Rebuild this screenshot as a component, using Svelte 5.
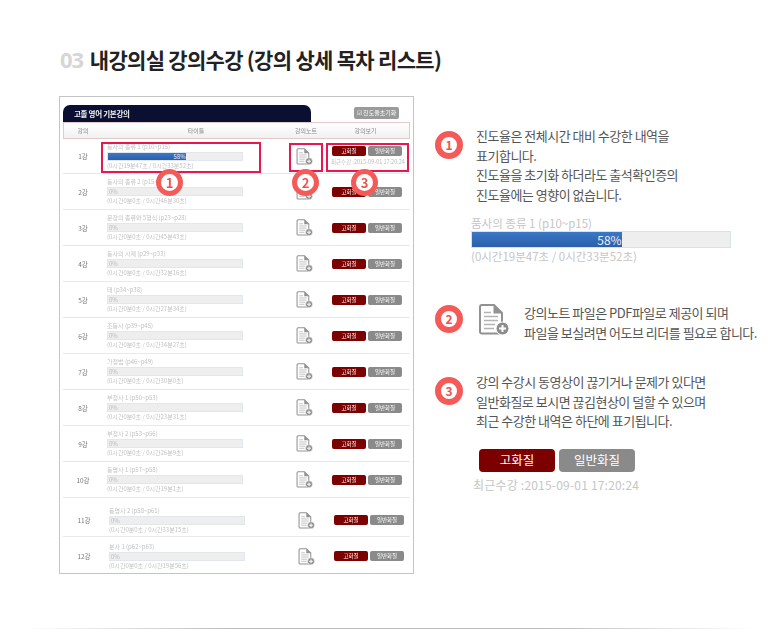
<script>
  const lectures = [
    { no: 1, title: '동사의 종류 1 (p10~p15)', time: '(0시간19분47초 / 0시간33분52초)', pct: 58, recent: '2015-09-01 17:20:24' },
    { no: 2, title: '동사의 종류 2 (p15~p22)', time: '(0시간0분0초 / 0시간46분30초)', pct: 0 },
    { no: 3, title: '문장의 종류와 5형식 (p23~p28)', time: '(0시간0분0초 / 0시간45분43초)', pct: 0 },
    { no: 4, title: '동사의 시제 (p29~p33)', time: '(0시간0분0초 / 0시간32분16초)', pct: 0 },
    { no: 5, title: '태 (p34~p38)', time: '(0시간0분0초 / 0시간27분34초)', pct: 0 },
    { no: 6, title: '조동사 (p39~p45)', time: '(0시간0분0초 / 0시간34분27초)', pct: 0 },
    { no: 7, title: '가정법 (p46~p49)', time: '(0시간0분0초 / 0시간30분0초)', pct: 0 },
    { no: 8, title: '부정사 1 (p50~p53)', time: '(0시간0분0초 / 0시간23분31초)', pct: 0 },
    { no: 9, title: '부정사 2 (p53~p56)', time: '(0시간0분0초 / 0시간26분9초)', pct: 0 },
    { no: 10, title: '동명사 1 (p57~p58)', time: '(0시간0분0초 / 0시간19분1초)', pct: 0 },
    { no: 11, title: '동명사 2 (p58~p61)', time: '(0시간0분0초 / 0시간33분15초)', pct: 0 },
    { no: 12, title: '분사 1 (p62~p63)', time: '(0시간0분0초 / 0시간19분56초)', pct: 0 },
  ];
</script>

{#snippet docIcon(cls)}
  <svg class={cls} viewBox="0 0 32 32" fill="none" aria-hidden="true">
    <path d="M2 3.500Q2 1.500 4 1.500H16L24 9.500V28Q24 30 22 30H4Q2 30 2 28Z" fill="#fff" stroke="#929292" stroke-width="2" />
    <path d="M15.500 1.500V10H24Z" fill="#929292" />
    <path d="M6 9H13M6 13H20M6 17H20M6 21H17M6 25H16" stroke="#b4b4b4" stroke-width="1.500" />
    <circle cx="24.500" cy="25" r="6.500" fill="#8c8c8c" stroke="#fff" stroke-width="1" />
    <path d="M24.500 21.500V28.500M21 25H28" stroke="#fff" stroke-width="2" />
  </svg>
{/snippet}

{#snippet badge(n)}
  <span class="badge">{n}</span>
{/snippet}

<div class="page">
  <h1 class="heading"><span class="num">03</span>내강의실 강의수강 (강의 상세 목차 리스트)</h1>

  <div class="content">
    <div class="panel">
      <div class="panel-top">
        <div class="tab">고졸 영어 기본강의</div>
        <div class="reset">☑ 진도율초기화</div>
      </div>
      <div class="thead">
        <span>강의</span><span>타이틀</span><span>강의노트</span><span>강의보기</span>
      </div>
      {#each lectures as l}
        <div class="row" class:late={l.no > 10} class:r11={l.no === 11} class:r12={l.no === 12} class:r1={l.no === 1}>
          <span class="no">{l.no}강</span>
          <div class="info">
            <div class="t">{l.title}</div>
            <div class="bar">
              {#if l.pct}
                <div class="fill" style="width:{l.pct}%">{l.pct}%</div>
              {:else}
                <span class="zero">0%</span>
              {/if}
            </div>
            <div class="t">{l.time}</div>
          </div>
          <div class="note">{@render docIcon('doc')}</div>
          <div class="view">
            <div class="btns"><span class="btn hi">고화질</span><span class="btn lo">일반화질</span></div>
            {#if l.recent}<div class="recent">최근수강 :{l.recent}</div>{/if}
          </div>
        </div>
      {/each}

      <div class="mark m1"></div>
      <div class="mark m2"></div>
      <div class="mark m3"></div>
      <div class="pin p1">1</div>
      <div class="pin p2">2</div>
      <div class="pin p3">3</div>
    </div>

    <div class="side">
      <section class="s1">
        {@render badge(1)}
        <p>진도율은 전체시간 대비 수강한 내역을<br />표기합니다.<br />진도율을 초기화 하더라도 출석확인증의<br />진도율에는 영향이 없습니다.</p>
      </section>
      <div class="sample">
        <div class="cap">품사의 종류 1 (p10~p15)</div>
        <div class="bigbar"><div class="bigfill" style="width:58%">58%</div></div>
        <div class="cap">(0시간19분47초 / 0시간33분52초)</div>
      </div>

      <section class="s2">
        {@render badge(2)}
        {@render docIcon('bigdoc')}
        <p>강의노트 파일은 PDF파일로 제공이 되며<br />파일을 보실려면 어도브 리더를 필요로 합니다.</p>
      </section>

      <section class="s3">
        {@render badge(3)}
        <p>강의 수강시 동영상이 끊기거나 문제가 있다면<br />일반화질로 보시면 끊김현상이 덜할 수 있으며<br />최근 수강한 내역은 하단에 표기됩니다.</p>
      </section>
      <div class="bigbtns"><span class="bigbtn hi">고화질</span><span class="bigbtn lo">일반화질</span></div>
      <div class="cap last">최근수강 :2015-09-01 17:20:24</div>
    </div>
  </div>

  <div class="rule"></div>
</div>

<style>
  :global(body) { margin: 0; background: #fff; }

  .page {
    position: relative;
    width: 780px;
    height: 629px;
    overflow: hidden;
    font-family: "Noto Sans CJK KR", "Noto Sans", sans-serif;
    color: #555;
  }

  .heading {
    margin: 0;
    padding: 45px 0 0 60px;
    height: 96px;
    box-sizing: border-box;
    font-size: 21px;
    line-height: 28px;
    font-weight: 700;
    letter-spacing: -0.7px;
    color: #222;
    white-space: nowrap;
  }
  .num {
    margin-right: 7px;
    font-family: "Open Sans", sans-serif;
    font-size: 22px;
    font-weight: 700;
    letter-spacing: -1.2px;
    color: #d6d6d6;
  }

  .content { display: flex; padding-left: 59px; }

  /* left: shrunken screenshot of the lecture list */
  .panel {
    position: relative;
    width: 355px;
    height: 478px;
    box-sizing: border-box;
    border: 1px solid #c4c4c4;
    padding: 8px 3px 0;
    font-size: 6px;
    color: #aaa;
    filter: blur(0.35px);
  }
  .panel-top { display: flex; justify-content: space-between; align-items: center; height: 17px; }
  .tab {
    width: 248px;
    height: 17px;
    box-sizing: border-box;
    padding-left: 11px;
    border-radius: 7px 7px 0 0;
    background: #0b1032;
    color: #f2f2f2;
    font-size: 7.500px;
    font-weight: 700;
    line-height: 17px;
    letter-spacing: -0.3px;
  }
  .reset {
    width: 45px;
    height: 12px;
    margin-right: 11px;
    margin-top: -2px;
    border-radius: 2px;
    background: #9a9a9a;
    color: #fff;
    font-size: 6px;
    line-height: 12px;
    text-align: center;
    white-space: nowrap;
  }
  .thead {
    display: grid;
    grid-template-columns: 38px 188px 32px 1fr;
    align-items: center;
    height: 17px;
    box-sizing: border-box;
    border: 1px solid #e4c9c9;
    background: linear-gradient(#fff, #f1f1f1);
    color: #888;
    text-align: center;
  }

  .row {
    display: grid;
    grid-template-columns: 44px 161px 64px 1fr;
    align-items: center;
    height: 36px;
    box-sizing: border-box;
    border-bottom: 1px solid #e9e9e9;
    color: #777;
  }
  .row.r1 { height: 35px; }
  .row.late { padding-left: 2px; }
  .row.r11 { height: 39px; padding-top: 6px; }
  .row.r12 { height: 37px; padding-top: 1px; border-bottom: 0; }
  .no { text-align: center; padding-right: 4px; font-size: 6.500px; }
  .row.late .no { padding-right: 6px; }
  .t { height: 8px; line-height: 8px; color: #c2c2c2; white-space: nowrap; }
  .bar {
    position: relative;
    width: 136px;
    height: 9px;
    margin: 1px 0;
    box-sizing: border-box;
    border: 1px solid #e1e7ee;
    background: #eee;
    line-height: 7px;
    color: #bbb;
  }
  .fill {
    height: 100%;
    background: linear-gradient(#3b78c6, #2b5fa9);
    color: #e8eef8;
    text-align: right;
  }
  .zero { display: block; padding-left: 1px; }
  .note { display: flex; padding-left: 28px; }
  .doc { width: 17px; height: 17px; }
  .btns { display: flex; gap: 2px; }
  .btn {
    width: 34px;
    height: 10px;
    border-radius: 2px;
    color: #fff;
    font-size: 5.500px;
    line-height: 10px;
    text-align: center;
  }
  .hi { background: #7d0000; }
  .lo { background: #8a8a8a; }
  .recent { margin: 3px 0 0 -1px; font-size: 5.500px; line-height: 7px; color: #bbb; white-space: nowrap; }

  .mark {
    position: absolute;
    top: 45px;
    height: 31px;
    box-sizing: border-box;
    border: 2px solid #e8174f;
  }
  .m1 { left: 41px; width: 160px; }
  .m2 { left: 229px; width: 34px; top: 46px; height: 29px; }
  .m3 { left: 266px; width: 83px; top: 46px; height: 29px; }
  .pin {
    position: absolute;
    top: 72px;
    width: 27px;
    height: 27px;
    box-sizing: border-box;
    border: 5px solid #f45b58;
    border-radius: 50%;
    background: #fff;
    color: #f0524f;
    font-size: 13px;
    font-weight: 700;
    line-height: 17px;
    text-align: center;
  }
  .p1 { left: 96px; }
  .p2 { left: 232px; }
  .p3 { left: 291px; }

  /* right: explanations */
  .side { width: 335px; margin-left: 21px; }
  .side section { position: relative; display: flex; align-items: flex-start; }
  .side p {
    margin: 0;
    font-size: 13px;
    line-height: 19.700px;
    letter-spacing: -0.5px;
    color: #555;
    white-space: nowrap;
  }
  .badge {
    flex: none;
    width: 28px;
    height: 28px;
    box-sizing: border-box;
    border: 6px solid #f45b58;
    border-radius: 50%;
    background: #fff;
    color: #f0524f;
    font-size: 12px;
    font-weight: 700;
    line-height: 15px;
    text-align: center;
  }
  .s1 { margin-top: 35px; height: 82px; }
  .s1 p { margin: -5px 0 0 13px; }
  .sample { margin: 2px 0 0 36px; }
  .cap { font-size: 11.500px; line-height: 16px; color: #c6c6c6; white-space: nowrap; }
  .bigbar {
    width: 260px;
    height: 17px;
    box-sizing: border-box;
    border: 1px solid #d9e2ec;
    background: #eee;
  }
  .bigfill {
    height: 100%;
    background: linear-gradient(#3b78c6, #2b5fa9);
    color: #e8eef8;
    font-size: 12px;
    line-height: 15px;
    text-align: right;
  }
  .s2 { margin-top: 40px; height: 34px; }
  .s2 .badge { margin-top: 1px; }
  .s2 p { margin: -1px 0 0 14px; }
  .bigdoc { width: 32px; height: 33px; margin: -1px 0 0 15px; flex: none; }
  .s3 { margin-top: 37px; height: 58px; }
  .s3 .badge { margin-top: 2px; }
  .s3 p { margin: -3px 0 0 13px; }
  .bigbtns { display: flex; gap: 4px; margin: 16px 0 0 44px; }
  .bigbtn {
    width: 76px;
    height: 23px;
    border-radius: 4px;
    color: #fff;
    font-size: 12.500px;
    line-height: 22px;
    text-align: center;
  }
  .last { margin: 5px 0 0 38px; font-size: 12px; letter-spacing: 0.2px; }

  .rule {
    position: absolute;
    left: 0;
    right: 0;
    bottom: 0;
    height: 1px;
    background: linear-gradient(90deg, #fff 3%, #bbb 30%, #bbb 70%, #fff 97%);
  }
</style>
